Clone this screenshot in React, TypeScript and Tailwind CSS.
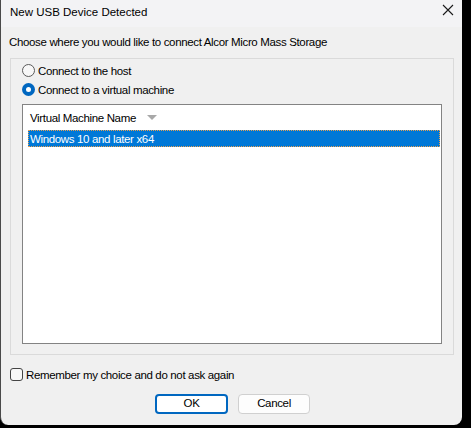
import React from "react";

const Radio = ({ checked, label }: { checked?: boolean; label: string }) => (
  <div className="flex h-[19px] items-center pl-[11px]">
    {checked ? (
      <span className="flex h-[13px] w-[13px] items-center justify-center rounded-full bg-[#0067c0]">
        <span className="h-[5px] w-[5px] rounded-full bg-white" />
      </span>
    ) : (
      <span className="h-[13px] w-[13px] rounded-full border border-[#5a5a5a] bg-[#f7f7f7]" />
    )}
    <span className="ml-[3px]">{label}</span>
  </div>
);

export default function App() {
  return (
    <div className="h-[428px] w-[471px] bg-black font-['Liberation_Sans',Arial,sans-serif] text-[11.5px] leading-[16px] tracking-[-0.35px] text-black">
      <div className="flex h-[425px] w-[462px] flex-col rounded-b-[8px] border-l border-[#4a4a4a] bg-[#f0f0f0]">
        {/* title bar */}
        <div className="flex h-[27px] items-start justify-between bg-[#f3f3f5] pl-[9px] pr-[8px]">
          <span className="pt-[4px] tracking-normal">New USB Device Detected</span>
          <svg width="12" height="12" viewBox="0 0 12 12" className="mt-[4px]">
            <path d="M1 1 L11 11 M11 1 L1 11" stroke="#1a1a1a" strokeWidth="1.1" />
          </svg>
        </div>

        <div className="mt-[7px] h-[16px] pl-[8px]">Choose where you would like to connect Alcor Micro Mass Storage</div>

        {/* group box */}
        <div className="ml-[9px] mr-[8px] mt-[8px] flex flex-col border border-[#dadada] pb-[10px] pt-[2px]">
          <Radio label="Connect to the host" />
          <Radio checked label="Connect to a virtual machine" />

          <div className="ml-[11px] mr-[11px] mt-[5px] flex h-[240px] flex-col border border-[#838383] bg-white">
            <div className="flex h-[25px] items-center pl-[7px]">
              <span className="w-[117px]">Virtual Machine Name</span>
              <svg width="10" height="5" viewBox="0 0 10 5">
                <path d="M0 0 L10 0 L5 5 Z" fill="#a8a8a8" />
              </svg>
            </div>
            <div className="ml-[5px] mr-[1px] flex h-[17px] items-center border border-dotted border-[#e8a050] bg-[#0078d7] pl-[1px] text-white">
              Windows 10 and later x64
            </div>
          </div>
        </div>

        {/* checkbox */}
        <div className="mt-[10px] flex h-[19px] items-center pl-[9px]">
          <span className="h-[13px] w-[13px] rounded-[3px] border border-[#444] bg-[#f7f7f7]" />
          <span className="ml-[3px]">Remember my choice and do not ask again</span>
        </div>

        {/* buttons */}
        <div className="mt-[10px] flex justify-center gap-[10px] pl-[2px]">
          <button className="h-[20px] w-[73px] rounded-[4px] border-2 border-[#0067c0] bg-white leading-none">
            OK
          </button>
          <button className="h-[20px] w-[72px] rounded-[4px] border border-[#d0d0d0] bg-[#fdfdfd] leading-none">
            Cancel
          </button>
        </div>
      </div>
    </div>
  );
}
